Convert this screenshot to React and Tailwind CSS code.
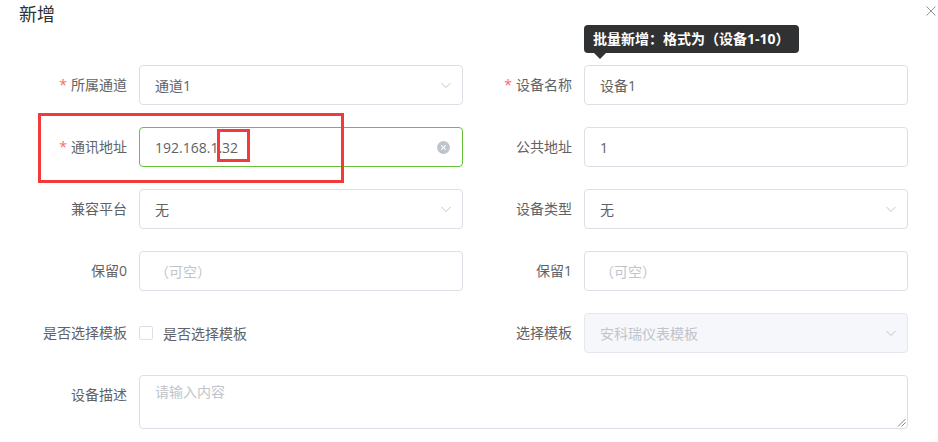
const font = { fontFamily: '"Open Sans", "Noto Sans CJK SC", sans-serif' };

function Chevron() {
  return (
    <svg className="w-[12px] h-[12px] text-[#c0c4cc]" viewBox="0 0 12 12" fill="none" stroke="currentColor" strokeWidth="1">
      <polyline points="1.5,4 6,8.5 10.5,4" />
    </svg>
  );
}

function Label({ text, required }) {
  return (
    <div className="w-[100px] shrink-0 pr-[12px] text-right text-[14px] leading-[40px] text-[#606266] whitespace-nowrap">
      {required && <span className="text-[#f56c6c] mr-[4px]">*</span>}
      {text}
    </div>
  );
}

function Field({ value, placeholder, select, disabled, focus, clear }) {
  const border = focus ? 'border-[#67c23a]' : disabled ? 'border-[#e4e7ed]' : 'border-[#dcdfe6]';
  const bg = disabled ? 'bg-[#f5f7fa]' : 'bg-white';
  return (
    <div className={`w-[324px] h-[40px] border ${border} ${bg} rounded-[4px] flex items-center pl-[15px] pr-[10px]`}>
      <span className={`flex-1 text-[14px] ${value && !disabled ? 'text-[#606266]' : 'text-[#c0c4cc]'}`}>
        {value || placeholder}
      </span>
      {select && <Chevron />}
      {clear && (
        <span className="w-[13px] h-[13px] rounded-full bg-[#c0c4cc] flex items-center justify-center mr-[2px]">
          <svg className="w-[7px] h-[7px]" viewBox="0 0 8 8" stroke="white" strokeWidth="1.4">
            <line x1="1.5" y1="1.5" x2="6.5" y2="6.5" />
            <line x1="6.5" y1="1.5" x2="1.5" y2="6.5" />
          </svg>
        </span>
      )}
    </div>
  );
}

function Item({ label, required, children }) {
  return (
    <div className="w-[424px] flex">
      <Label text={label} required={required} />
      {children}
    </div>
  );
}

export default function App() {
  return (
    <div className="w-[938px] h-[442px] bg-white relative overflow-hidden" style={font}>
      {/* Header */}
      <div className="h-[65px] pl-[19px] pt-[2px]">
        <span className="text-[18px] leading-[24px] text-[#303133]">新增</span>
      </div>
      <button className="absolute top-[6px] left-[926px] w-[10px] h-[10px]">
        <svg className="w-full h-full" viewBox="0 0 10 10" stroke="#909399" strokeWidth="1">
          <line x1="0.5" y1="0.5" x2="9.5" y2="9.5" />
          <line x1="9.5" y1="0.5" x2="0.5" y2="9.5" />
        </svg>
      </button>

      {/* Form */}
      <div className="pl-[39px] flex flex-col gap-[22px]">
        <div className="flex gap-[21px]">
          <Item label="所属通道" required>
            <Field value="通道1" select />
          </Item>
          <Item label="设备名称" required>
            <Field value="设备1" />
          </Item>
        </div>
        <div className="flex gap-[21px]">
          <Item label="通讯地址" required>
            <Field value="192.168.1.32" focus clear />
          </Item>
          <Item label="公共地址">
            <Field value="1" />
          </Item>
        </div>
        <div className="flex gap-[21px]">
          <Item label="兼容平台">
            <Field value="无" select />
          </Item>
          <Item label="设备类型">
            <Field value="无" select />
          </Item>
        </div>
        <div className="flex gap-[21px]">
          <Item label="保留0">
            <Field placeholder="（可空）" />
          </Item>
          <Item label="保留1">
            <Field placeholder="（可空）" />
          </Item>
        </div>
        <div className="flex gap-[21px]">
          <Item label="是否选择模板">
            <div className="flex items-center h-[40px]">
              <span className="w-[14px] h-[14px] border border-[#dcdfe6] rounded-[2px] bg-white" />
              <span className="ml-[10px] text-[14px] text-[#606266]">是否选择模板</span>
            </div>
          </Item>
          <Item label="选择模板">
            <Field value="安科瑞仪表模板" select disabled />
          </Item>
        </div>
        <div className="flex">
          <Label text="设备描述" />
          <div className="relative w-[769px] h-[54px] border border-[#dcdfe6] rounded-[4px] px-[15px] py-[5px] text-[14px] leading-[21px] text-[#c0c4cc]">
            请输入内容
            <svg className="absolute right-[1px] bottom-[1px] w-[9px] h-[9px]" viewBox="0 0 9 9" stroke="#606266" strokeWidth="0.8">
              <line x1="8.5" y1="1" x2="1" y2="8.5" />
              <line x1="8.5" y1="4.5" x2="4.5" y2="8.5" />
            </svg>
          </div>
        </div>
      </div>

      {/* Tooltip */}
      <div className="absolute left-[584px] top-[25px] h-[28px] px-[9px] rounded-[4px] bg-[#303133] text-white text-[14px] font-bold leading-[28px] whitespace-nowrap">
        批量新增：格式为（设备1-10）
        <span className="absolute left-[10px] top-[28px] w-0 h-0 border-l-[6px] border-r-[6px] border-t-[6px] border-l-transparent border-r-transparent border-t-[#303133]" />
      </div>

      {/* Annotation boxes */}
      <div className="absolute left-[38px] top-[113px] w-[306px] h-[70px] border-[3px] border-[#f23a3a]" />
      <div className="absolute left-[217px] top-[129px] w-[33px] h-[33px] border-[3px] border-[#f23a3a]" />
    </div>
  );
}
